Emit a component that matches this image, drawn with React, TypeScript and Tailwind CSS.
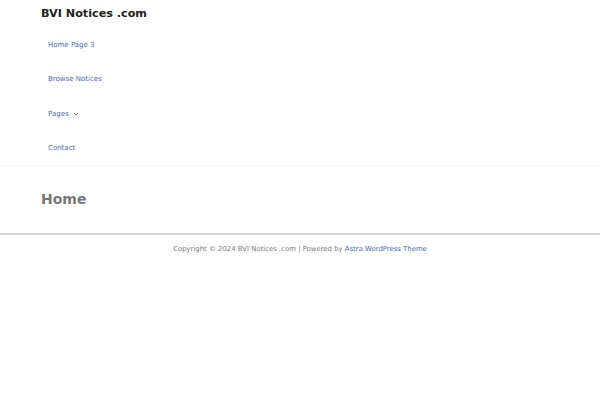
import React from "react";

export default function App() {
  const font = { fontFamily: '"DejaVu Sans", sans-serif' };
  return (
    <div className="w-[600px] h-[400px] bg-white" style={font}>
      <header className="border-b border-[#f0f0f0]">
        <div className="px-[41px] pt-[6px]">
          <div className="text-[11.2px] font-bold text-[#222] leading-[16px]">BVI Notices .com</div>
        </div>
        <nav className="px-[48px] pt-[6px] flex flex-col">
          {["Home Page 3", "Browse Notices", "Pages", "Contact"].map((t) => (
            <div key={t} className="h-[34.4px] flex items-center text-[7px] text-[#4a68b8]">
              <span>{t}</span>
              {t === "Pages" && (
                <svg width="6" height="4" viewBox="0 0 6 4" className="ml-[4px] mt-[1px]">
                  <path d="M1 1 L3 3 L5 1" fill="none" stroke="#4a68b8" strokeWidth="0.8" />
                </svg>
              )}
            </div>
          ))}
        </nav>
      </header>
      <main className="border-b-2 border-[#d6d6d6] h-[68px] flex items-center px-[41px]">
        <h1 className="text-[14px] font-bold text-[#777]">Home</h1>
      </main>
      <footer className="pt-[9px] text-center text-[6.9px] text-[#7a7a7a]">
        Copyright © 2024 BVI Notices .com | Powered by <span className="text-[#4a68b8]">Astra WordPress Theme</span>
      </footer>
    </div>
  );
}
